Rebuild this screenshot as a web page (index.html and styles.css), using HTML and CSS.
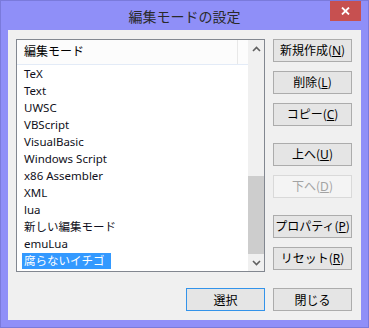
FILE: index.html
```html
<!DOCTYPE html>
<html lang="ja">
<head>
    <meta charset="UTF-8">
    <meta name="viewport" content="width=device-width, initial-scale=1.0">
    <title>編集モードの設定</title>
    <link rel="stylesheet" href="styles.css">
</head>
<body>
    <div class="window">
        <div class="titlebar">
            <span></span>
            <div class="title">編集モードの設定</div>
            <button class="close-button">
                <svg width="9" height="8" viewBox="0 0 9 8">
                    <path d="M1 0.5 L8 7.5 M8 0.5 L1 7.5" stroke="#fff" stroke-width="1.8"/>
                </svg>
            </button>
        </div>

        <div class="client">
            <div class="listbox">
                <div class="list-main">
                    <div class="list-header">
                        <div class="header-cell">編集モード</div>
                    </div>
                    <ul class="items">
                        <li><span>TeX</span></li>
                        <li><span>Text</span></li>
                        <li><span>UWSC</span></li>
                        <li><span>VBScript</span></li>
                        <li><span>VisualBasic</span></li>
                        <li><span>Windows Script</span></li>
                        <li><span>x86 Assembler</span></li>
                        <li><span>XML</span></li>
                        <li><span>lua</span></li>
                        <li><span>新しい編集モード</span></li>
                        <li><span>emuLua</span></li>
                        <li class="selected"><span>腐らないイチゴ</span></li>
                    </ul>
                </div>
                <div class="scrollbar">
                    <div class="scroll-arrow">
                        <svg width="9" height="6" viewBox="0 0 9 6">
                            <path d="M1 5 L4.5 1.5 L8 5" fill="none" stroke="#606060" stroke-width="1.6"/>
                        </svg>
                    </div>
                    <div class="scroll-track">
                        <div class="scroll-thumb"></div>
                    </div>
                    <div class="scroll-arrow">
                        <svg width="9" height="6" viewBox="0 0 9 6">
                            <path d="M1 1 L4.5 4.5 L8 1" fill="none" stroke="#606060" stroke-width="1.6"/>
                        </svg>
                    </div>
                </div>
            </div>

            <div class="side-buttons">
                <div class="button-group">
                    <button class="btn">新規作成(<u>N</u>)</button>
                    <button class="btn">削除(<u>L</u>)</button>
                    <button class="btn">コピー(<u>C</u>)</button>
                </div>
                <div class="button-group">
                    <button class="btn">上へ(<u>U</u>)</button>
                    <button class="btn" disabled>下へ(<u>D</u>)</button>
                </div>
                <div class="button-group">
                    <button class="btn">プロパティ(<u>P</u>)</button>
                    <button class="btn">リセット(<u>R</u>)</button>
                </div>
            </div>

            <button class="btn default select-button">選択</button>
            <button class="btn">閉じる</button>
        </div>
    </div>
</body>
</html>
```

FILE: styles.css
```css
* {
    margin: 0;
    padding: 0;
    box-sizing: border-box;
    font-family: "Noto Sans", "Noto Sans CJK JP", sans-serif;
}

body {
    width: 369px;
    height: 328px;
    background: #ffffff;
}

.window {
    width: 369px;
    height: 328px;
    background: #8f8ff8;
    border: 1px solid #7a7adb;
    padding: 0 7px 7px 7px;
    display: flex;
    flex-direction: column;
}

/* タイトルバー */
.titlebar {
    height: 29px;
    display: grid;
    grid-template-columns: 1fr auto 1fr;
    align-items: center;
}

.title {
    font-family: "Noto Sans CJK JP", sans-serif;
    font-size: 14px;
    color: #2a2a2a;
    line-height: 1;
}

.close-button {
    justify-self: end;
    align-self: start;
    width: 31px;
    height: 20px;
    background: #c75050;
    border: none;
    display: flex;
    align-items: center;
    justify-content: center;
}

.client {
    flex: 1;
    background: #f0f0f0;
    padding: 9px 9px 9px 8px;
    display: grid;
    grid-template-columns: 249px 79px;
    grid-template-rows: 233px 23px;
    column-gap: 8px;
    row-gap: 16px;
}

/* リスト */
.listbox {
    border: 1px solid #828790;
    background: #ffffff;
    display: flex;
}

.list-main {
    flex: 1;
}

.list-header {
    height: 25px;
    background: #fcfcfc;
    border-bottom: 1px solid #e3ebf7;
}

.header-cell {
    width: 221px;
    height: 24px;
    border-right: 1px solid #e8e8e8;
    padding-left: 7px;
    font-size: 12px;
    line-height: 24px;
    color: #000;
}

.items {
    list-style: none;
}

.items li {
    height: 17px;
    padding-left: 5px;
    font-size: 11.5px;
    line-height: 16px;
    color: #101020;
}

.items li span {
    display: inline-block;
    height: 16px;
    margin-top: 1px;
    padding: 0 6px 0 2px;
}

.items li.selected span {
    background: #3399ff;
    color: #ffffff;
}

.scrollbar {
    width: 16px;
    background: #f0f0f0;
    display: flex;
    flex-direction: column;
}

.scroll-arrow {
    height: 17px;
    display: flex;
    align-items: center;
    justify-content: center;
}

.scroll-track {
    flex: 1;
    display: flex;
    flex-direction: column;
    justify-content: flex-end;
}

.scroll-thumb {
    height: 78px;
    background: #cdcdcd;
}

/* ボタン */
.side-buttons {
    display: flex;
    flex-direction: column;
    gap: 17px;
}

.button-group {
    display: flex;
    flex-direction: column;
    gap: 9px;
}

.btn {
    width: 79px;
    height: 23px;
    background: #e5e5e5;
    border: 1px solid #acacac;
    font-family: "Noto Sans CJK JP", sans-serif;
    font-size: 12px;
    line-height: 1;
    color: #000;
}

.btn u {
    font-family: "Noto Sans", sans-serif;
    text-underline-offset: 1px;
}

.btn:disabled {
    background: #f4f4f4;
    border-color: #d9d9d9;
    color: #a3a3a3;
}

.btn.default {
    border-color: #3393ea;
}

.select-button {
    justify-self: end;
}
```
